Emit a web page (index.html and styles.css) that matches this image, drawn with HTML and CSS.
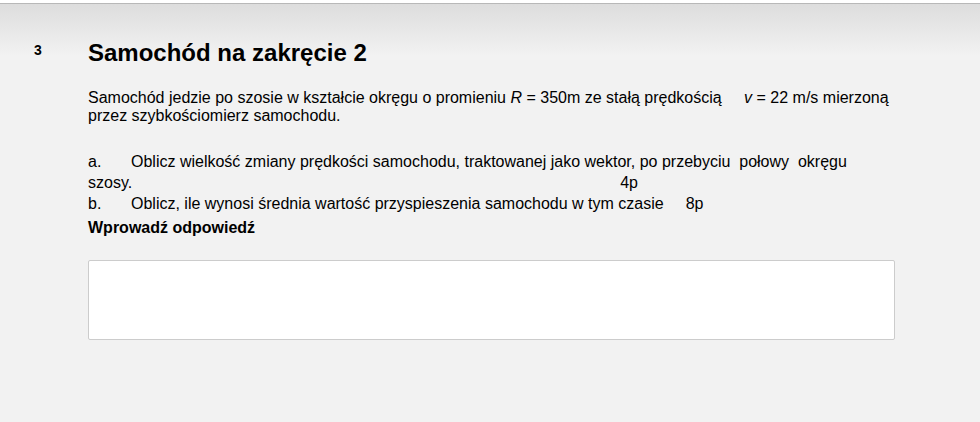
FILE: index.html
```html
<!DOCTYPE html>
<html lang="pl">
<head>
<meta charset="utf-8">
<link rel="stylesheet" href="styles.css">
</head>
<body>
<div class="page">
  <div class="question">
    <div class="num">3</div>
    <div class="content">
      <h1 class="title">Samochód na zakręcie 2</h1>
      <p class="intro">Samochód jedzie po szosie w kształcie okręgu o promieniu <i>R</i> = 350m ze stałą prędkością <span class="gap1"></span><i>v</i> = 22 m/s mierzoną przez szybkościomierz samochodu.</p>
      <p class="item"><span class="lbl">a.</span>Oblicz wielkość zmiany prędkości samochodu, traktowanej jako wektor, po przebyciu&nbsp; połowy&nbsp; okręgu szosy.<span class="pts-a">4p</span></p>
      <p class="item"><span class="lbl">b.</span>Oblicz, ile wynosi średnia wartość przyspieszenia samochodu w tym czasie<span class="pts-b">8p</span></p>
      <p class="answer-label">Wprowadź odpowiedź</p>
      <div class="answer-box"></div>
    </div>
  </div>
</div>
</body>
</html>
```
FILE: styles.css
```css
html, body {
  margin: 0;
  padding: 0;
  background: #ffffff;
}
body {
  font-family: "Liberation Sans", Arial, sans-serif;
  color: #000;
}
.page {
  margin-top: 3px;
  border-top: 1px solid #b8b8b8;
  height: 418px;
  background: linear-gradient(#dddddd 0px, #f2f2f2 52px, #f2f2f2 100%);
}
.question {
  display: flex;
  padding-top: 35px;
}
.num {
  width: 54px;
  padding-left: 34px;
  font-size: 14px;
  font-weight: bold;
  line-height: 16px;
  padding-top: 3px;
}
.content {
  width: 807px;
}
.title {
  margin: 0;
  font-size: 24px;
  font-weight: bold;
  line-height: 28px;
}
.intro {
  margin: 22px 0 0 0;
  font-size: 16px;
  line-height: 18px;
  width: 810px;
}
.gap1 {
  display: inline-block;
  width: 18px;
}
.item {
  margin: 0;
  font-size: 16px;
  line-height: 21px;
}
.intro + .item {
  margin-top: 26px;
}
.lbl {
  display: inline-block;
  width: 43px;
}
.pts-a {
  display: inline-block;
  margin-left: 488px;
}
.pts-b {
  display: inline-block;
  margin-left: 22px;
}
.answer-label {
  margin: 3px 0 0 0;
  font-size: 16px;
  font-weight: bold;
  line-height: 21px;
}
.answer-box {
  margin-top: 22px;
  height: 78px;
  background: #fff;
  border: 1px solid #cccccc;
  border-radius: 2px;
}
```
